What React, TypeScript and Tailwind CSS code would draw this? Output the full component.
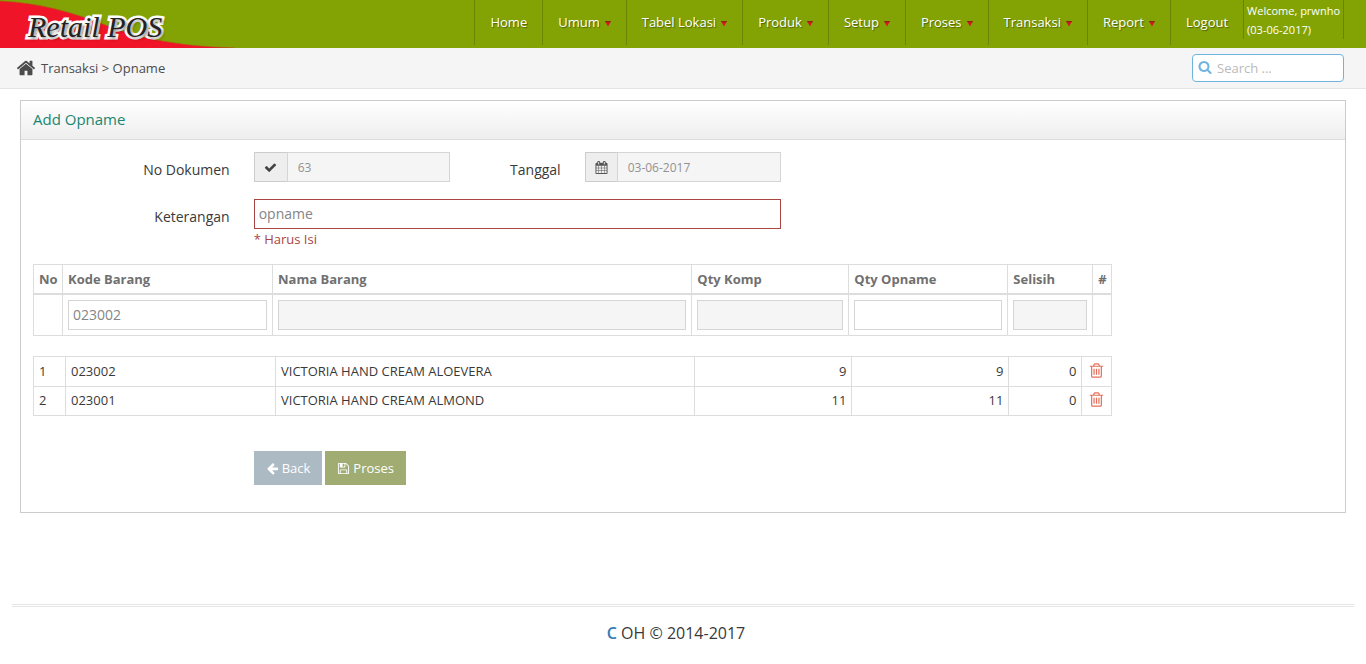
import React from "react";

const ICONS = {
  home: "M1472 992v480q0 26-19 45t-45 19h-384v-384h-256v384h-384q-26 0-45-19t-19-45v-480q0-1 .5-3t.5-3l575-474 575 474q1 2 1 6zm223-69l-62 74q-8 9-21 11h-3q-13 0-21-7l-692-577-692 577q-12 8-24 7-13-2-21-11l-62-74q-8-10-7-23.5t11-21.5l719-599q32-26 76-26t76 26l244 204v-195q0-14 9-23t23-9h192q14 0 23 9t9 23v408l219 182q10 8 11 21.5t-7 23.5z",
  search:
    "M1216 832q0-185-131.5-316.5t-316.5-131.5-316.5 131.5-131.5 316.5 131.5 316.5 316.5 131.5 316.5-131.5 131.5-316.5zm512 832q0 52-38 90t-90 38q-54 0-90-38l-343-342q-179 124-399 124-143 0-273.5-55.5t-225-150-150-225-55.5-273.5 55.5-273.5 150-225 225-150 273.5-55.5 273.5 55.5 225 150 150 225 55.5 273.5q0 220-124 399l343 343q37 37 37 90z",
  check:
    "M1671 566q0 40-28 68l-724 724-136 136q-28 28-68 28t-68-28l-136-136-362-362q-28-28-28-68t28-68l136-136q28-28 68-28t68 28l294 295 656-657q28-28 68-28t68 28l136 136q28 28 28 68z",
  calendar:
    "M192 1664h288v-288h-288v288zm352 0h320v-288h-320v288zm-352-352h288v-320h-288v320zm352 0h320v-320h-320v320zm-352-384h288v-288h-288v288zm736 736h320v-288h-320v288zm-384-736h320v-288h-320v288zm768 736h288v-288h-288v288zm-384-352h320v-320h-320v320zm-352-864v-288q0-13-9.5-22.5t-22.5-9.5h-64q-13 0-22.5 9.5t-9.5 22.5v288q0 13 9.5 22.5t22.5 9.5h64q13 0 22.5-9.5t9.5-22.5zm736 864h288v-320h-288v320zm-384-384h320v-288h-320v288zm384 0h288v-288h-288v288zm32-480v-288q0-13-9.5-22.5t-22.5-9.5h-64q-13 0-22.5 9.5t-9.5 22.5v288q0 13 9.5 22.5t22.5 9.5h64q13 0 22.5-9.5t9.5-22.5zm384-64v1280q0 52-38 90t-90 38h-1408q-52 0-90-38t-38-90v-1280q0-52 38-90t90-38h128v-96q0-66 47-113t113-47h64q66 0 113 47t47 113v96h384v-96q0-66 47-113t113-47h64q66 0 113 47t47 113v96h128q52 0 90 38t38 90z",
  back: "M1664 896v128q0 53-32.5 90.5t-84.5 37.5h-704l293 294q38 36 38 90t-38 90l-75 76q-37 37-90 37-52 0-91-37l-651-652q-37-37-37-90 0-52 37-91l651-650q38-38 91-38 52 0 90 38l75 74q38 38 38 91t-38 91l-293 293h704q52 0 84.5 37.5t32.5 90.5z",
  save: "M512 1536h768v-384h-768v384zm896 0h128v-896q0-14-10-38.5t-20-34.5l-281-281q-10-10-34-20t-39-10v416q0 40-28 68t-68 28h-576q-40 0-68-28t-28-68v-416h-128v1280h128v-416q0-40 28-68t68-28h832q40 0 68 28t28 68v416zm-384-928v-320q0-13-9.5-22.5t-22.5-9.5h-192q-13 0-22.5 9.5t-9.5 22.5v320q0 13 9.5 22.5t22.5 9.5h192q13 0 22.5-9.5t9.5-22.5zm640 32v928q0 40-28 68t-68 28h-1344q-40 0-68-28t-28-68v-1344q0-40 28-68t68-28h928q40 0 88 20t76 48l280 280q28 28 48 76t20 88z",
  trash:
    "M704 736v576q0 14-9 23t-23 9h-64q-14 0-23-9t-9-23v-576q0-14 9-23t23-9h64q14 0 23 9t9 23zm256 0v576q0 14-9 23t-23 9h-64q-14 0-23-9t-9-23v-576q0-14 9-23t23-9h64q14 0 23 9t9 23zm256 0v576q0 14-9 23t-23 9h-64q-14 0-23-9t-9-23v-576q0-14 9-23t23-9h64q14 0 23 9t9 23zm128 724v-948h-896v948q0 22 7 40.5t14.5 27 10.5 8.5h832q3 0 10.5-8.5t14.5-27 7-40.5zm-672-1076h448l-48-117q-7-9-17-11h-317q-10 2-17 11zm928 32v64q0 14-9 23t-23 9h-96v948q0 83-47 143.5t-113 60.5h-832q-66 0-113-58.5t-47-141.5v-952h-96q-14 0-23-9t-9-23v-64q0-14 9-23t23-9h309l70-167q15-37 54-63t79-26h320q40 0 79 26t54 63l70 167h309q14 0 23 9t9 23z",
};

function Icon({ name, className }: { name: keyof typeof ICONS; className: string }) {
  return (
    <svg viewBox="0 0 1792 1792" fill="currentColor" aria-hidden="true" className={`shrink-0 ${className}`}>
      <path d={ICONS[name]} />
    </svg>
  );
}

const MENU = [
  { label: "Home", sub: false },
  { label: "Umum", sub: true },
  { label: "Tabel Lokasi", sub: true },
  { label: "Produk", sub: true },
  { label: "Setup", sub: true },
  { label: "Proses", sub: true },
  { label: "Transaksi", sub: true },
  { label: "Report", sub: true },
  { label: "Logout", sub: false },
];

const ROWS = [
  { no: 1, kode: "023002", nama: "VICTORIA HAND CREAM ALOEVERA", komp: 9, opname: 9, selisih: 0 },
  { no: 2, kode: "023001", nama: "VICTORIA HAND CREAM ALMOND", komp: 11, opname: 11, selisih: 0 },
];

const TH = "border-t border-l border-[#ddd] px-[5px] pt-[2px] text-left font-bold last:border-r";
const ENTRY = "border-t-2 border-l border-b border-[#ddd] px-[5px] last:border-r";
const TD = "border-t border-l border-[#ddd] px-[5px] last:border-r group-last:border-b";
const FIELD = "block h-[30px] w-full border border-[#d5d5d5] px-1 pb-[2px] text-sm text-[#858585] outline-none";
const LOCKED = "bg-[#f5f5f5]";

function Header() {
  return (
    <header className="relative flex h-12 justify-between bg-[#83a305] text-white">
      <svg viewBox="0 0 240 48" aria-hidden="true" className="absolute top-0 left-0 h-12 w-60">
        <path d="M0 1C40 3 72 12 108 26C140 38 175 46 235 48H0Z" fill="#ef1428" />
        <path d="M0 1C40 3 72 12 108 26C140 38 175 46 235 48" fill="none" stroke="#b05a10" strokeWidth="0.7" />
      </svg>
      <a
        href="#"
        className="relative ml-7 font-['Liberation_Serif',serif] text-[30px] leading-[54px] text-[#222] italic [-webkit-text-stroke:5px_white] [paint-order:stroke_fill] [text-shadow:2px_2px_3px_rgba(0,0,0,0.45)]"
      >
        Retail POS
      </a>
      <nav className="mr-[22px] flex items-start">
        {MENU.map((item) => (
          <a
            key={item.label}
            href="#"
            className="flex h-[45px] items-center gap-[5px] border-l border-[#6b8404] px-[15px] text-[13px] [text-shadow:1px_1px_1px_rgba(0,0,0,0.4)]"
          >
            {item.label}
            {item.sub && (
              <svg viewBox="0 0 6 6" aria-hidden="true" className="mt-[3px] size-1.5">
                <path d="M0 0H6L3 5.5Z" fill="#d9142a" />
                <path d="M0 0H6L5.4 1.2H0.6Z" fill="#8c2a08" />
              </svg>
            )}
          </a>
        ))}
        <div className="h-[39px] border-x border-[#6b8404] pt-px pr-[3px] pl-[3px] text-[11px] leading-[19px]">
          Welcome, prwnho
          <br />
          (03-06-2017)
        </div>
      </nav>
    </header>
  );
}

export default function App() {
  return (
    <div className="bg-white font-['Open_Sans',sans-serif] text-[13px] text-[#393939]">
      <Header />

      <div className="flex h-[41px] items-center justify-between border-b border-[#e5e5e5] bg-[#f5f5f5] pr-[22px] pl-4 text-[#4c4c4c]">
        <div className="flex items-center gap-[5px]">
          <Icon name="home" className="size-5" />
          <span className="pt-[2px]">
            <a href="#">Transaksi</a> &gt; <a href="#">Opname</a>
          </span>
        </div>
        <label className="flex h-7 w-[152px] items-center gap-[5px] rounded border border-[#6fb3e0] bg-white px-[5px] text-[#6fb3e0]">
          <Icon name="search" className="mb-[2px] size-[14px]" />
          <input
            type="text"
            aria-label="Search"
            placeholder="Search ..."
            className="w-full min-w-0 bg-transparent pt-[2px] text-[13px] text-[#666] outline-none placeholder:text-[#bababa]"
          />
        </label>
      </div>

      <main className="mx-5 mt-[11px] border border-[#ccc]">
        <h1 className="h-[39px] border-b border-[#ddd] bg-linear-to-b from-white to-[#eee] px-3 text-[15px] leading-9 text-[#188673]">
          Add Opname
        </h1>

        <form className="pb-[27px]" onSubmit={(e) => e.preventDefault()}>
          <div className="grid grid-cols-12 pt-3">
            <label htmlFor="nodok" className="col-span-2 px-3 pt-2 text-right text-sm">
              No Dokumen
            </label>
            <div className="col-span-2 flex px-3">
              <span className="flex h-[30px] w-[33px] shrink-0 items-center justify-center border border-r-0 border-[#ccc] bg-[#eee] text-[#444]">
                <Icon name="check" className="size-[13px]" />
              </span>
              <input
                id="nodok"
                readOnly
                defaultValue="63"
                className="h-[30px] w-full min-w-0 border border-[#d5d5d5] bg-[#f5f5f5] px-[10px] text-xs text-[#939192] outline-none"
              />
            </div>
            <label htmlFor="tanggal" className="col-span-1 px-3 pt-2 text-right text-sm">
              Tanggal
            </label>
            <div className="col-span-2 flex px-3">
              <span className="flex h-[30px] w-8 shrink-0 items-center justify-center border border-r-0 border-[#ccc] bg-[#eee] text-[#555]">
                <Icon name="calendar" className="size-[13px]" />
              </span>
              <input
                id="tanggal"
                readOnly
                defaultValue="03-06-2017"
                className="h-[30px] w-full min-w-0 border border-[#d5d5d5] bg-[#f5f5f5] px-[10px] text-xs text-[#939192] outline-none"
              />
            </div>
          </div>

          <div className="mt-[17px] grid grid-cols-12">
            <label htmlFor="ket" className="col-span-2 px-3 pt-2 text-right text-sm">
              Keterangan
            </label>
            <div className="col-span-5 px-3">
              <input
                id="ket"
                defaultValue="opname"
                className="block h-[30px] w-full border border-[#a94442] px-1 pb-[2px] text-sm text-[#858585] outline-none"
              />
              <p className="leading-5 text-[#a94442]">* Harus Isi</p>
            </div>
          </div>

          <div className="w-10/12 px-3 pt-[15px]">
            <table className="w-full table-fixed border-separate border-spacing-0">
              <colgroup>
                <col className="w-[29px]" />
                <col className="w-[210px]" />
                <col />
                <col className="w-[157px]" />
                <col className="w-[159px]" />
                <col className="w-[85px]" />
                <col className="w-5" />
              </colgroup>
              <thead>
                <tr className="h-[29px] text-[#707070]">
                  <th className={TH}>No</th>
                  <th className={TH}>Kode Barang</th>
                  <th className={TH}>Nama Barang</th>
                  <th className={TH}>Qty Komp</th>
                  <th className={TH}>Qty Opname</th>
                  <th className={TH}>Selisih</th>
                  <th className={TH}>#</th>
                </tr>
              </thead>
              <tbody>
                <tr className="h-[43px]">
                  <td className={ENTRY}></td>
                  <td className={ENTRY}>
                    <input aria-label="Kode Barang" defaultValue="023002" className={FIELD} />
                  </td>
                  <td className={ENTRY}>
                    <input aria-label="Nama Barang" readOnly className={`${FIELD} ${LOCKED}`} />
                  </td>
                  <td className={ENTRY}>
                    <input aria-label="Qty Komp" readOnly className={`${FIELD} ${LOCKED}`} />
                  </td>
                  <td className={ENTRY}>
                    <input aria-label="Qty Opname" className={FIELD} />
                  </td>
                  <td className={ENTRY}>
                    <input aria-label="Selisih" readOnly className={`${FIELD} ${LOCKED}`} />
                  </td>
                  <td className={ENTRY}></td>
                </tr>
              </tbody>
            </table>

            <table className="mt-5 w-full table-fixed border-separate border-spacing-0">
              <colgroup>
                <col className="w-8" />
                <col className="w-[210px]" />
                <col />
                <col className="w-[157px]" />
                <col className="w-[157px]" />
                <col className="w-[73px]" />
                <col className="w-[31px]" />
              </colgroup>
              <tbody>
                {ROWS.map((row) => (
                  <tr key={row.no} className="group h-[30px]">
                    <td className={TD}>{row.no}</td>
                    <td className={TD}>{row.kode}</td>
                    <td className={TD}>{row.nama}</td>
                    <td className={`${TD} text-right`}>{row.komp}</td>
                    <td className={`${TD} text-right`}>{row.opname}</td>
                    <td className={`${TD} text-right`}>{row.selisih}</td>
                    <td className={TD}>
                      <button
                        type="button"
                        aria-label={`Hapus ${row.kode}`}
                        className="flex w-full justify-center pb-[3px] text-[#e4705c]"
                      >
                        <Icon name="trash" className="size-[17px]" />
                      </button>
                    </td>
                  </tr>
                ))}
              </tbody>
            </table>
          </div>

          <div className="mt-[35px] grid grid-cols-12">
            <div className="col-span-10 col-start-3 flex gap-[3px] px-3 text-white [text-shadow:0_-1px_0_rgba(0,0,0,0.25)]">
              <button type="button" className="flex h-[34px] items-center gap-[3px] bg-[#abbac3] px-3 pt-px">
                <Icon name="back" className="size-[13px]" />
                Back
              </button>
              <button type="submit" className="flex h-[34px] items-center gap-[3px] bg-[#a0ac72] px-3 pt-px">
                <Icon name="save" className="size-[13px]" />
                Proses
              </button>
            </div>
          </div>
        </form>
      </main>

      <footer className="mx-3 mt-[91px] border-t-[3px] border-double border-[#e5e5e5] pt-[14px] pr-[14px] text-center text-base">
        <span className="font-semibold text-[#337ab7]">C</span> OH © 2014-2017
      </footer>
    </div>
  );
}
